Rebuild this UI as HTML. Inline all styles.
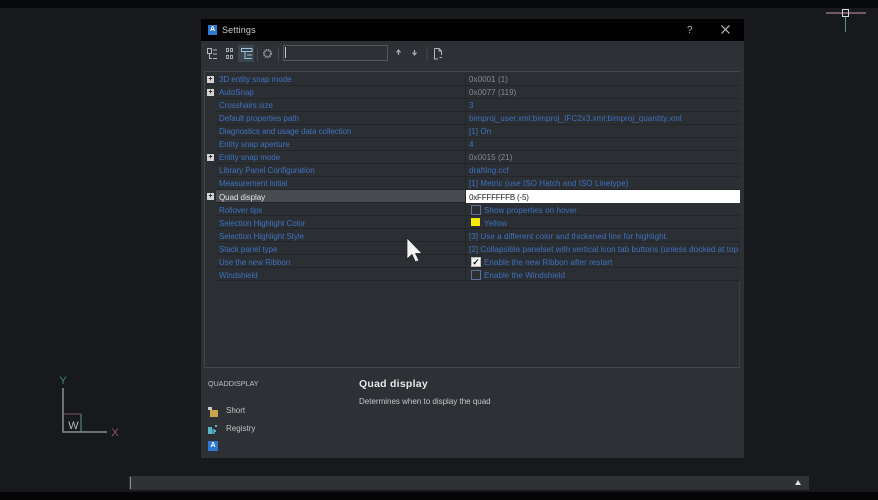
<!DOCTYPE html>
<html>
<head>
<meta charset="utf-8">
<style>
html,body{margin:0;padding:0;background:#17191c;width:878px;height:500px;overflow:hidden}
*{box-sizing:border-box}
body{position:relative;font-family:"Liberation Sans",sans-serif;font-size:8px;color:#3f72bf}
#wrap{position:absolute;left:0;top:0;width:878px;height:500px;filter:blur(.35px)}
.a{position:absolute}
#dlg{left:201px;top:19px;width:543px;height:439px;background:#2d3034}
.row{position:absolute;height:13px;border-bottom:1px solid #232629;background:#2b2e32}
.n,.v{position:absolute;top:1px;line-height:13px;white-space:nowrap}
.up .n,.up .v{top:0}
.n{left:219px;letter-spacing:-.05px}
.v{left:469px;width:271px;overflow:hidden;letter-spacing:.07px}
.g{color:#868a8e}
.plus{position:absolute;left:207px;top:3px;width:7px;height:7px;background:#d4d6d8;color:#222;font-size:7px;line-height:7px;text-align:center;font-weight:bold}
.cb{position:absolute;left:471px;top:2px;width:10px;height:10px;border:1px solid #5a7396;background:#2b2e32}
.cb.on{background:#f4f4f4;border-color:#bbb;color:#111;font-size:9px;line-height:8px;text-align:center;font-weight:bold}
</style>
</head>
<body>
<div id="wrap">
<div class="a" style="left:0;top:0;width:878px;height:8px;background:#08090a"></div>
<div class="a" style="left:0;top:492px;width:878px;height:8px;background:#050505"></div>

<!-- Crosshair -->
<div class="a" style="left:826px;top:12px;width:40px;height:2px;background:#6d5a5c"></div>
<div class="a" style="left:845px;top:17px;width:1px;height:15px;background:#4e9a78"></div>
<div class="a" style="left:842px;top:9px;width:7px;height:8px;border:1px solid #d5d8d6"></div>

<!-- UCS -->
<svg class="a" style="left:40px;top:365px" width="100" height="80">
<path d="M23 23V67H67" fill="none" stroke="#8c8f90" stroke-width="1.5"/>
<path d="M41 49V67" fill="none" stroke="#5a9a80" stroke-width="1"/>
<path d="M23 49H41" stroke="#7d5a60" stroke-width="1"/>
<text x="33.500" y="64" font-family="Liberation Sans" font-size="11" fill="#b5b8b8" text-anchor="middle">W</text>
<text x="23" y="19" font-family="Liberation Sans" font-size="11" fill="#3f8a6c" text-anchor="middle">Y</text>
<text x="75" y="71" font-family="Liberation Sans" font-size="11" fill="#8c5f60" text-anchor="middle">X</text>
</svg>

<!-- Command line -->
<div class="a" style="left:129px;top:476px;width:680px;height:14px;background:#2e3235"></div>
<div class="a" style="left:130px;top:477px;width:1px;height:12px;background:#8f9294"></div>
<div class="a" style="left:795px;top:480px;width:0;height:0;border-left:3.500px solid transparent;border-right:3.500px solid transparent;border-bottom:5px solid #e0e0e0"></div>

<!-- Dialog -->
<div id="dlg" class="a"></div>
<div class="a" style="left:201px;top:19px;width:543px;height:22px;background:#020203"></div>
<div class="a" style="left:208px;top:25px;width:9px;height:10px;background:#2e78d2;color:#fff;font-size:7px;line-height:10px;text-align:center;font-weight:bold">A</div>
<div class="a" style="left:222px;top:24px;font-size:9px;line-height:13px;color:#c8cacc;letter-spacing:.15px">Settings</div>
<div class="a" style="left:687px;top:24px;font-size:10px;line-height:13px;color:#b5b7b9">?</div>
<svg class="a" style="left:720px;top:24px" width="11" height="11"><path d="M1.500 1.500L9.500 9.500M9.500 1.500L1.500 9.500" stroke="#c5c7c9" stroke-width="1.100"/></svg>

<!-- Toolbar -->
<div class="a" style="left:238px;top:45px;width:16px;height:17px;background:#39464f"></div>
<svg class="a" style="left:205px;top:45px" width="240" height="17" fill="none" stroke="#b5b8ba" stroke-width="1">
<path d="M2.500 3.500H6.500V8.500H2.500ZM4.500 8.500V13.500H7M8 5H12M8 9H12M8 13.500H12"/>
<path d="M21.500 3.500H23.500V6.500H21.500ZM25.500 3.500H27.500V6.500H25.500ZM21.500 10.500H23.500V13.500H21.500ZM25.500 10.500H27.500V13.500H25.500Z" stroke="#a5a8ab"/>
<path d="M36.500 3.500H47V6.500H36.500ZM40 6.500V13.500H47M42 10H47" stroke="#9fc0d4"/>
<circle cx="62.500" cy="8.500" r="3.500" stroke="#8d9094" stroke-width="2.200" stroke-dasharray="1.500 .6"/>
<path d="M52.500 2V16M73.500 2V16" stroke="#44474a"/>
</svg>
<div class="a" style="left:283px;top:45px;width:105px;height:16px;border:1px solid #55585b;background:#2d3034"></div>
<div class="a" style="left:285px;top:47px;width:1px;height:11px;background:#c8c8c8"></div>
<svg class="a" style="left:392px;top:46px" width="60" height="15" fill="none" stroke="#a5a8aa" stroke-width="1">
<path d="M6.500 9V4.500M4.500 6.500L6.500 4L8.500 6.500" stroke-width="1.300"/>
<path d="M22.500 4V8.500M20.500 6.500L22.500 9L24.500 6.500" stroke-width="1.300"/>
<path d="M35 1V15" stroke="#44474a"/>
<path d="M42.500 2.500H47L49.500 5V9M42.500 2.500V13H46M47 2.500V5H49.500M47.500 11.500H50" stroke="#b5b8ba"/>
</svg>

<!-- Table -->
<div class="a" style="left:204px;top:71px;width:536px;height:297px;background:#2b2e32;border:1px solid #45484b;border-right:1px solid #3c3f42"></div>

<div class="a" style="left:0;top:73px;width:878px;height:208px">
<div class="row" style="top:0;left:216px;width:524px"></div><div class="row" style="top:13px;left:216px;width:524px"></div><div class="row" style="top:26px;left:216px;width:524px"></div><div class="row" style="top:39px;left:216px;width:524px"></div><div class="row" style="top:52px;left:216px;width:524px"></div><div class="row" style="top:65px;left:216px;width:524px"></div><div class="row" style="top:78px;left:216px;width:524px"></div><div class="row" style="top:91px;left:216px;width:524px"></div><div class="row" style="top:104px;left:216px;width:524px"></div><div class="row" style="top:117px;left:216px;width:524px;background:#484b4f"></div><div class="row" style="top:130px;left:216px;width:524px"></div><div class="row" style="top:143px;left:216px;width:524px"></div><div class="row" style="top:156px;left:216px;width:524px"></div><div class="row" style="top:169px;left:216px;width:524px"></div><div class="row" style="top:182px;left:216px;width:524px"></div><div class="row" style="top:195px;left:216px;width:524px"></div>
<div class="a" style="left:465px;top:0;width:1px;height:208px;background:#232629"></div>

<div class="a up" style="left:0;top:0;width:878px;height:13px"><div class="plus">+</div><div class="n">3D entity snap mode</div><div class="v g">0x0001 (1)</div></div>
<div class="a up" style="left:0;top:13px;width:878px;height:13px"><div class="plus">+</div><div class="n">AutoSnap</div><div class="v g">0x0077 (119)</div></div>
<div class="a up" style="left:0;top:26px;width:878px;height:13px"><div class="n">Crosshairs size</div><div class="v">3</div></div>
<div class="a up" style="left:0;top:39px;width:878px;height:13px"><div class="n">Default properties path</div><div class="v">bimproj_user.xml;bimproj_IFC2x3.xml;bimproj_quantity.xml</div></div>
<div class="a up" style="left:0;top:52px;width:878px;height:13px"><div class="n">Diagnostics and usage data collection</div><div class="v">[1] On</div></div>
<div class="a up" style="left:0;top:65px;width:878px;height:13px"><div class="n">Entity snap aperture</div><div class="v">4</div></div>
<div class="a up" style="left:0;top:78px;width:878px;height:13px"><div class="plus">+</div><div class="n">Entity snap mode</div><div class="v g">0x0015 (21)</div></div>
<div class="a up" style="left:0;top:91px;width:878px;height:13px"><div class="n">Library Panel Configuration</div><div class="v">drafting.ccf</div></div>
<div class="a up" style="left:0;top:104px;width:878px;height:13px"><div class="n">Measurement initial</div><div class="v">[1] Metric (use ISO Hatch and ISO Linetype)</div></div>
<div class="a" style="left:0;top:117px;width:878px;height:13px"><div class="plus">+</div><div class="n" style="color:#e4e5e6">Quad display</div>
  <div class="a" style="left:466px;top:0;width:274px;height:13px;background:#fff"></div><div class="v" style="color:#222;letter-spacing:-.2px">0xFFFFFFFB (-5)</div></div>
<div class="a" style="left:0;top:130px;width:878px;height:13px"><div class="n">Rollover tips</div><div class="cb"></div><div class="v" style="left:484px;width:256px">Show properties on hover</div></div>
<div class="a" style="left:0;top:143px;width:878px;height:13px"><div class="n">Selection Highlight Color</div><div class="a" style="left:471px;top:2px;width:9px;height:8px;background:#f5ea00"></div><div class="v" style="left:484px;width:256px">Yellow</div></div>
<div class="a" style="left:0;top:156px;width:878px;height:13px"><div class="n">Selection Highlight Style</div><div class="v">[3] Use a different color and thickened line for highlight.</div></div>
<div class="a" style="left:0;top:169px;width:878px;height:13px"><div class="n">Stack panel type</div><div class="v">[2] Collapsible panelset with vertical icon tab buttons (unless docked at top or bottom)</div></div>
<div class="a" style="left:0;top:182px;width:878px;height:13px"><div class="n">Use the new Ribbon</div><div class="cb on">✓</div><div class="v" style="left:484px;width:256px">Enable the new Ribbon after restart</div></div>
<div class="a" style="left:0;top:195px;width:878px;height:13px"><div class="n">Windshield</div><div class="cb"></div><div class="v" style="left:484px;width:256px">Enable the Windshield</div></div>
</div>

<!-- Cursor -->
<svg class="a" style="left:405px;top:237px" width="20" height="28"><path d="M2 1V22L7 17.500L10.500 25L14 23.500L10.500 16.500H17Z" fill="#f4f4f4" stroke="#222" stroke-width=".7"/></svg>

<!-- Bottom panel -->
<div class="a" style="left:208px;top:377px;font-size:7.200px;line-height:13px;color:#c0c3c5">QUADDISPLAY</div>
<div class="a" style="left:359px;top:377px;font-size:10.500px;line-height:15px;font-weight:bold;color:#e6e7e8;letter-spacing:.25px">Quad display</div>
<div class="a" style="left:359px;top:395px;font-size:8px;line-height:13px;color:#c5c7c9">Determines when to display the quad</div>
<div class="a" style="left:226px;top:404px;font-size:8px;line-height:13px;color:#c0c3c5">Short</div>
<div class="a" style="left:226px;top:422px;font-size:8px;line-height:13px;color:#c0c3c5">Registry</div>
<svg class="a" style="left:207px;top:405px" width="12" height="12"><rect x="3" y="5" width="8" height="7" fill="#c7a64d"/><rect x="1" y="2" width="4" height="3" fill="#c8c8c8"/></svg>
<svg class="a" style="left:207px;top:423px" width="12" height="12"><rect x="1" y="4" width="4" height="7" fill="#5bb3c0"/><rect x="5" y="6" width="3" height="5" fill="#3f8fb0"/><rect x="8" y="2" width="2" height="2" fill="#5bb3c0"/><rect x="7" y="7" width="2" height="2" fill="#5bb3c0"/></svg>
<div class="a" style="left:208px;top:441px;width:10px;height:10px;background:#2e78d2;color:#fff;font-size:7px;line-height:10px;text-align:center;font-weight:bold">A</div>
</div>
</body>
</html>
